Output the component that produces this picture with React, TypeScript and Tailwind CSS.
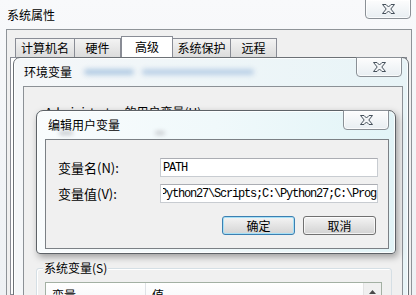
import React from "react";

function CloseGlyph() {
  return (
    <svg width="13" height="10" viewBox="0 0 13 10">
      <polygon
        points="0.5,0.5 4,0.5 6.5,3 9,0.5 12.5,0.5 8.8,5 12.5,9.5 9,9.5 6.5,7 4,9.5 0.5,9.5 4.2,5"
        fill="#f3f5f7"
        stroke="#45505b"
        strokeWidth="1"
        strokeLinejoin="round"
      />
    </svg>
  );
}

function CloseButton({ className }: { className: string }) {
  return (
    <div
      className={`absolute top-[-1px] h-[20px] rounded-b-[4px] border border-[#8a9096] bg-gradient-to-b from-[#fdfdfd] to-[#e8eef2] flex items-center justify-center shadow-[inset_0_0_0_1px_rgba(255,255,255,0.75)] ${className}`}
    >
      <CloseGlyph />
    </div>
  );
}

const tabs = [
  { label: "计算机名", w: "w-[60px]", sel: false },
  { label: "硬件", w: "w-[46px]", sel: false },
  { label: "高级", w: "w-[52px]", sel: true },
  { label: "系统保护", w: "w-[58px]", sel: false },
  { label: "远程", w: "w-[46px]", sel: false },
];

export default function App() {
  return (
    <div className="relative w-[416px] h-[295px] overflow-hidden bg-[#f3f5f8] text-[12px] leading-[14px] text-black font-['Noto_Sans_CJK_SC',sans-serif]">
      {/* 系统属性 window */}
      <div className="absolute left-0 top-0 w-[416px] h-[295px] flex flex-col bg-gradient-to-b from-[#f8f9fb] to-[#eef1f4]">
        <div className="h-[29px] shrink-0 flex items-center pl-[7px]">系统属性</div>
        <CloseButton className="left-[365px] w-[46px]" />
        <div className="ml-[6px] w-[406px] flex-1 border-l border-t border-r border-[#8e9398] bg-[#f0f0f0] flex flex-col">
          <div className="flex items-end h-[27px] pl-[8px] pt-[6px] shrink-0">
            {tabs.map((t) => (
              <div
                key={t.label}
                className={
                  t.sel
                    ? `${t.w} h-[21px] border border-b-0 border-[#898c95] bg-white flex items-center justify-center`
                    : `${t.w} h-[19px] border border-b-0 border-l-0 first:border-l border-[#898c95] bg-gradient-to-b from-[#f3f3f3] to-[#dcdcdc] flex items-center justify-center`
                }
              >
                {t.label}
              </div>
            ))}
          </div>
          <div className="flex-1 ml-[3px] mr-[4px] border border-[#898c95] bg-white" />
        </div>
      </div>

      {/* 环境变量 window */}
      <div className="absolute left-[13px] top-[57px] w-[396px] h-[250px] rounded-t-[7px] border border-[#6c7176] bg-gradient-to-r from-[#f5f7f9] to-[#e8f4f7] flex flex-col shadow-[inset_0_0_0_1px_rgba(255,255,255,0.8)]">
        <div className="relative h-[28px] shrink-0 flex items-center pl-[10px]">
          <span>环境变量</span>
          <div className="absolute left-[70px] top-[11px] w-[50px] h-[6px] rounded-full bg-[#b2cbe3] blur-[2.5px]" />
          <div className="absolute left-[128px] top-[11px] w-[112px] h-[6px] rounded-full bg-[#bad0e6] blur-[2.5px]" />
        </div>
        <CloseButton className="left-[342px] w-[46px]" />
        <div className="ml-[9px] w-[380px] flex-1 border border-[#8c9196] bg-[#f0f0f0] pl-[12px] pt-[25px]">
          <div className="relative w-[356px] h-[141px] rounded-[3px] border border-[#d5dfe5]">
            <span className="absolute left-[7px] top-[-8px] px-[1px] bg-[#f0f0f0] whitespace-nowrap">
              Administrator 的用户变量(U)
            </span>
          </div>
          <div className="relative mt-[15px] w-[356px] h-[60px] rounded-[3px] border border-[#d5dfe5] shadow-[inset_1px_1px_0_#ffffff]">
            <span className="absolute left-[6px] top-[-8px] px-[1px] bg-[#f0f0f0] whitespace-nowrap">系统变量(S)</span>
            <div className="ml-[8px] mt-[13px] w-[337px] h-[40px] border border-[#a3b0a3] bg-white flex">
              <div className="flex-1 flex h-[24px] bg-gradient-to-b from-white to-[#f4f5f7]">
                <div className="w-[100px] border-r border-[#dfe2e6] pl-[6px] flex items-center">变量</div>
                <div className="flex-1 pl-[6px] flex items-center">值</div>
              </div>
              <div className="w-[18px] border-l border-[#e4e4e4] bg-[#f0f0f0]">
                <div className="h-[17px] flex items-center justify-center">
                  <svg width="7" height="4" viewBox="0 0 7 4">
                    <polygon points="3.5,0 7,4 0,4" fill="#4a4a4a" />
                  </svg>
                </div>
              </div>
            </div>
          </div>
        </div>
      </div>

      {/* 编辑用户变量 dialog */}
      <div className="absolute left-[36px] top-[110px] w-[360px] h-[144px] rounded-t-[7px] rounded-b-[4px] border border-[#5d6267] bg-gradient-to-r from-[#f9fcfd] via-[#f0f9fb] to-[#e2f4f7] flex flex-col shadow-[2px_3px_7px_rgba(0,0,0,0.35),inset_0_0_0_1px_rgba(255,255,255,0.85)]">
        <div className="relative h-[28px] shrink-0 flex items-center pl-[11px]">
          <span>编辑用户变量</span>
          <div className="absolute left-[22px] top-[20px] w-[14px] h-[4px] rounded-full bg-[#c4c8cc] blur-[2px]" />
          <div className="absolute left-[118px] top-[20px] w-[10px] h-[4px] rounded-full bg-[#c9cdd1] blur-[2px]" />
        </div>
        <CloseButton className="left-[306px] w-[46px]" />
        <div className="ml-[8px] w-[344px] h-[110px] border border-[#7b8085] bg-[#f0f0f0] pt-[18px] pl-[12px] pr-[10px]">
          <div className="flex items-center h-[19px]">
            <span className="flex-1 text-[13px]">变量名(N):</span>
            <div className="w-[218px] h-[19px] border border-[#c8ccd1] border-t-[#abadb3] bg-white overflow-hidden flex items-center pl-[2px] font-['Liberation_Mono',monospace] text-[12px] tracking-[-1.2px] whitespace-nowrap">
              PATH
            </div>
          </div>
          <div className="flex items-center h-[19px] mt-[7px]">
            <span className="flex-1 text-[13px]">变量值(V):</span>
            <div className="w-[218px] h-[19px] border border-[#c8ccd1] border-t-[#abadb3] bg-white pl-[2px] flex items-center font-['Liberation_Mono',monospace] text-[12px] tracking-[-1.2px] whitespace-nowrap">
              <div className="flex-1 h-full overflow-hidden flex items-center">
                <span className="ml-[-3px] shrink-0">Python27\Scripts;C:\Python27;C:\Program Files</span>
              </div>
            </div>
          </div>
          <div className="mt-[13px] flex justify-end gap-[8px] pr-[2px]">
            <div className="w-[73px] h-[19px] rounded-[3px] border border-[#3c7fb1] bg-gradient-to-b from-[#f4f4f4] to-[#d4d4d4] shadow-[inset_0_0_0_1px_#a6e0f6] flex items-center justify-center">
              确定
            </div>
            <div className="w-[73px] h-[19px] rounded-[3px] border border-[#707070] bg-gradient-to-b from-[#f4f4f4] to-[#d2d2d2] shadow-[inset_0_0_0_1px_rgba(255,255,255,0.7)] flex items-center justify-center">
              取消
            </div>
          </div>
        </div>
      </div>
    </div>
  );
}
